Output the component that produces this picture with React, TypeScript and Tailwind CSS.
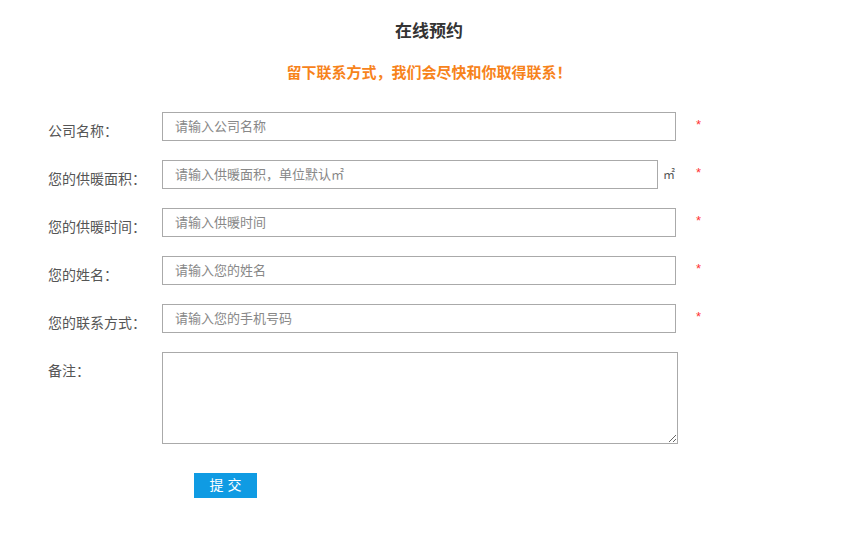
const fields = [
  { label: '公司名称：', placeholder: '请输入公司名称', unit: false },
  { label: '您的供暖面积：', placeholder: '请输入供暖面积，单位默认㎡', unit: true },
  { label: '您的供暖时间：', placeholder: '请输入供暖时间', unit: false },
  { label: '您的姓名：', placeholder: '请输入您的姓名', unit: false },
  { label: '您的联系方式：', placeholder: '请输入您的手机号码', unit: false },
];

export default function App() {
  return (
    <div className="w-[858px] h-[539px] bg-white font-['Liberation_Sans','Noto_Sans_CJK_SC',sans-serif] text-[#555]">
      <h2 className="pt-[22px] text-center text-[17px] leading-5 font-bold text-[#333]">在线预约</h2>
      <p className="mt-[21px] text-center text-[15px] leading-5 font-bold text-[#f7831b]">
        留下联系方式，我们会尽快和你取得联系！
      </p>

      <form className="mt-[29px] pl-12 flex flex-col gap-[19px]" onSubmit={e => e.preventDefault()}>
        {fields.map(f => (
          <div key={f.label} className="flex items-start">
            <label className="w-[114px] pt-[9px] text-[14px] leading-5 shrink-0">{f.label}</label>
            <div className="flex items-center w-[514px]">
              <input
                placeholder={f.placeholder}
                className={`h-[29px] border border-[#aaa] pl-3 text-[13px] text-[#333] placeholder:text-[#888] outline-none ${f.unit ? 'w-[496px]' : 'w-[514px]'}`}
              />
              {f.unit && <span className="ml-[5px] text-[12px] text-[#555]">㎡</span>}
            </div>
            <span className="ml-[20px] pt-[3px] text-[13px] leading-5 text-[#f33]">*</span>
          </div>
        ))}

        <div className="flex items-start">
          <label className="w-[114px] pt-[9px] text-[14px] leading-5 shrink-0">备注：</label>
          <textarea className="w-[516px] h-[92px] border border-[#aaa] p-2 text-[13px] outline-none" />
        </div>

        <div className="pl-[146px] mt-[10px]">
          <button
            type="submit"
            className="w-[63px] h-[25px] bg-[#0f9be3] text-white text-[14px] leading-[25px]"
          >
            提 交
          </button>
        </div>
      </form>
    </div>
  );
}
